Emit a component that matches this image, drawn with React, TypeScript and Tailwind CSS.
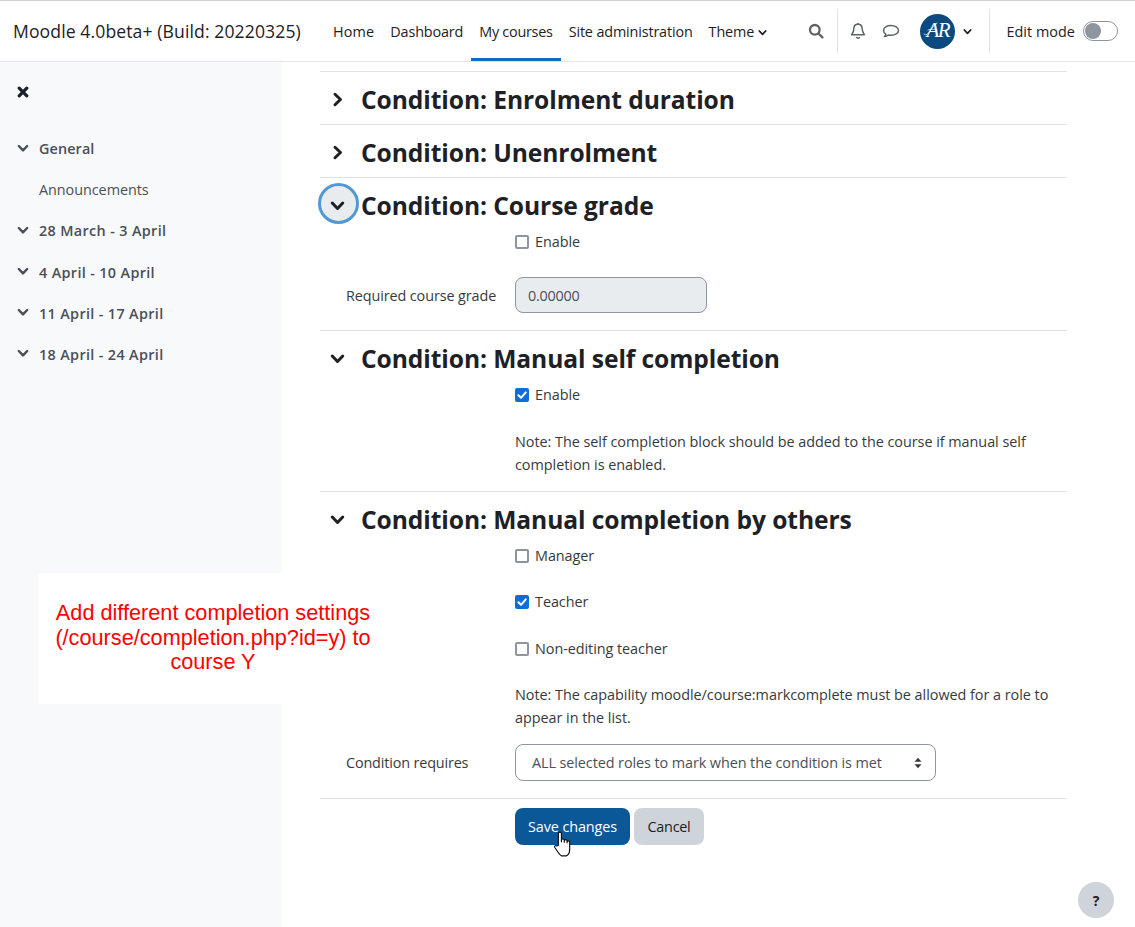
import React from "react";

const Chevron = ({ right = false, className = "" }: { right?: boolean; className?: string }) => (
  <svg viewBox="0 0 12 12" className={className} fill="none" stroke="currentColor" strokeWidth="2.4" strokeLinecap="round" strokeLinejoin="round">
    {right ? <path d="M4 1.8 8.4 6 4 10.2" /> : <path d="M1.8 4 6 8.4 10.2 4" />}
  </svg>
);

const Box = ({ checked = false }: { checked?: boolean }) =>
  checked ? (
    <span className="w-[14px] h-[14px] rounded-[2px] bg-[#0f6cd8] flex items-center justify-center shrink-0">
      <svg viewBox="0 0 14 14" className="w-[14px] h-[14px]" fill="none" stroke="#fff" strokeWidth="2" strokeLinecap="round" strokeLinejoin="round">
        <path d="M3.4 7.2 6 9.8 10.8 4.4" />
      </svg>
    </span>
  ) : (
    <span className="w-[14px] h-[14px] rounded-[2px] border-2 border-[#8f959e] bg-white shrink-0" />
  );

const Check = ({ label, checked = false, cls = "" }: { label: string; checked?: boolean; cls?: string }) => (
  <div className={`flex items-center gap-[6px] h-[22px] text-[14.4px] text-[#373a3c] tracking-[-0.05px] ${cls}`}>
    <Box checked={checked} />
    <span>{label}</span>
  </div>
);

const Section = ({
  title,
  open = true,
  focus = false,
  children,
  cls = "",
}: {
  title: string;
  open?: boolean;
  focus?: boolean;
  children?: React.ReactNode;
  cls?: string;
}) => (
  <section className={`border-t border-[#dee2e6] ${cls}`}>
    <div className="relative flex items-center h-[52px] pl-[41px] pt-[4px]">
      {focus && (
        <span className="absolute left-[-2px] top-[5px] w-[41px] h-[41px] rounded-full bg-[#e9ecef] border-[3px] border-[#5397d3]" />
      )}
      <Chevron right={!open} className="absolute left-[10px] top-[20px] w-[15px] h-[15px] text-[#1d2125]" />
      <h3 className="relative text-[24.6px] font-bold text-[#1d2125] tracking-[-0.08px]">{title}</h3>
    </div>
    {children}
  </section>
);

const navItem = "flex items-center h-full px-2 pt-[2px] text-[14.4px] text-[#1d2125]";

const sideItems = ["28 March - 3 April", "4 April - 10 April", "11 April - 17 April", "18 April - 24 April"];

export default function App() {
  return (
    <div className="relative w-[1135px] h-[927px] overflow-hidden bg-white font-['Open_Sans','Noto_Sans',sans-serif] tracking-[-0.25px]">
      <header className="h-[62px] border-t border-t-[#d0d0d0] border-b border-b-[#e3e5e8] flex items-center pl-[13px] bg-white">
        <div className="text-[17.6px] text-[#1d2125] w-[312px] whitespace-nowrap tracking-[0.1px]">Moodle 4.0beta+ (Build: 20220325)</div>
        <nav className="flex h-full tracking-[-0.15px]">
          <a className={`${navItem} tracking-[0.15px]`}>Home</a>
          <a className={navItem}>Dashboard</a>
          <a className={`${navItem} relative tracking-[-0.25px]`}>
            My courses
            <span className="absolute left-0 right-0 bottom-0 h-[3px] bg-[#0f6cbf]" />
          </a>
          <a className={navItem}>Site administration</a>
          <a className={`${navItem} gap-1`}>
            Theme <Chevron className="w-[9px] h-[9px]" />
          </a>
        </nav>
        <div className="ml-auto flex items-center h-full">
          <svg viewBox="0 0 16 16" className="w-[16px] h-[16px] text-[#5f6368] mr-[13px]" fill="none" stroke="currentColor" strokeWidth="2.3" strokeLinecap="round">
            <circle cx="6.8" cy="6.8" r="4.8" />
            <path d="M10.5 10.5 14.4 14.4" />
          </svg>
          <div className="w-px h-[44px] bg-[#dee2e6]" />
          <svg viewBox="0 0 16 18" className="w-[16px] h-[18px] ml-[12px] text-[#5f6368]" fill="none" stroke="currentColor" strokeWidth="1.5" strokeLinejoin="round">
            <path d="M8 2.2c-2.8 0-4.2 2.1-4.2 4.6 0 3.4-1.8 5-2.2 6h12.800c-.4-1-2.2-2.6-2.2-6 0-2.500-1.400-4.600-4.200-4.600Z" />
            <path d="M8 1v1.2M6.400 15a1.700 1.700 0 0 0 3.200 0" />
          </svg>
          <svg viewBox="0 0 18 16" className="w-[18px] h-[16px] ml-[16px] text-[#5f6368]" fill="none" stroke="currentColor" strokeWidth="1.5" strokeLinejoin="round">
            <path d="M9 2.5c-4 0-7.500 2-7.500 5 0 1.500 1 2.800 2.400 3.600-.2 1-.8 1.800-1.500 2.400 1.500-.1 3-.7 4-1.500.8.1 1.600.2 2.600.2 4 0 7.500-2 7.500-4.700s-3.500-5-7.500-5Z" />
          </svg>
          <div className="relative ml-[20px] w-[35px] h-[35px] rounded-full bg-[#0b4a80] flex items-center justify-center text-white text-[21px] italic font-['Liberation_Serif',serif] tracking-[-1.5px]">
            <svg viewBox="0 0 35 35" className="absolute inset-0 w-[35px] h-[35px]" fill="none" stroke="#e8eef4" strokeWidth="0.8" strokeLinecap="round">
              <path d="M4 20c2 2 4 0 6-3 3-4 5-7 7-8M8 16c3-1 6-1 9 0" />
            </svg>
            <span className="relative">AR</span>
          </div>
          <Chevron className="w-[9px] h-[9px] text-[#1d2125] ml-[8px] mr-[17px]" />
          <div className="w-px h-[44px] bg-[#dee2e6]" />
          <span className="ml-[16px] text-[14.4px] text-[#1d2125] tracking-[0.05px] pt-[1px]">Edit mode</span>
          <span className="ml-[8px] mr-[17px] w-[35px] h-[20px] rounded-full border border-[#8f959e] bg-white p-[1px] flex items-center">
            <span className="w-[16px] h-[16px] rounded-full bg-[#8f959e]" />
          </span>
        </div>
      </header>

      <div className="flex h-[865px]">
        <aside className="w-[282px] bg-[#f8f9fa] shrink-0 pl-[17px]">
          <svg viewBox="0 0 12 12" className="w-[12px] h-[12px] mt-[24px] text-[#1d2125]" fill="none" stroke="currentColor" strokeWidth="3.2" strokeLinecap="round">
            <path d="M2.200 2.200 9.800 9.800M9.800 2.200 2.200 9.800" />
          </svg>
          <div className="mt-[40px] text-[14.4px] text-[#495057]">
            <div className="flex items-center h-[22px] font-semibold tracking-[0.1px]">
              <Chevron className="w-[12px] h-[12px] mr-[10px] -mt-[3px]" />
              General
            </div>
            <div className="h-[22px] mt-[19px] pl-[22px] flex items-center tracking-[-0.05px]">Announcements</div>
            {sideItems.map((s) => (
              <div key={s} className="flex items-center h-[22px] mt-[19.2px] font-semibold tracking-[0.35px]">
                <Chevron className="w-[12px] h-[12px] mr-[10px] -mt-[3px]" />
                {s}
              </div>
            ))}
          </div>
        </aside>

        <main className="w-[747px] ml-[38px] pt-[9px]">
          <Section title="Condition: Enrolment duration" open={false} />
          <Section title="Condition: Unenrolment" open={false} />
          <Section title="Condition: Course grade" focus cls="h-[153px]">
            <div className="pl-[195px] pt-[1px]">
              <Check label="Enable" />
            </div>
            <div className="flex items-center mt-[24px]">
              <label className="w-[195px] pl-[26px] pt-[1px] text-[14.4px] text-[#373a3c] tracking-[-0.1px]">Required course grade</label>
              <div className="w-[192px] h-[36px] rounded-[8px] border border-[#8f959e] bg-[#e9ecef] pl-[12px] pt-[1px] flex items-center text-[14.4px] text-[#495057]">
                0.00000
              </div>
            </div>
          </Section>
          <Section title="Condition: Manual self completion" cls="h-[161px]">
            <div className="pl-[195px] pt-[1px]">
              <Check label="Enable" checked />
              <p className="mt-[23.5px] text-[14.4px] leading-[23px] text-[#373a3c] w-[530px] tracking-[-0.03px]">
                Note: The self completion block should be added to the course if manual self completion is enabled.
              </p>
            </div>
          </Section>
          <Section title="Condition: Manual completion by others" cls="h-[307px]">
            <div className="pl-[195px] pt-[1px]">
              <Check label="Manager" />
              <Check label="Teacher" checked cls="mt-[24px]" />
              <Check label="Non-editing teacher" cls="mt-[25px]" />
              <p className="mt-[23px] text-[14.4px] leading-[23px] text-[#373a3c] w-[545px] tracking-[-0.03px]">
                Note: The capability moodle/course:markcomplete must be allowed for a role to appear in the list.
              </p>
            </div>
            <div className="flex items-center mt-[15px]">
              <label className="w-[195px] pl-[26px] text-[14.4px] text-[#373a3c] tracking-[-0.15px]">Condition requires</label>
              <div className="relative w-[421px] h-[37px] rounded-[8px] border border-[#8f959e] bg-white pl-[16px] flex items-center text-[14.4px] text-[#495057] tracking-[-0.08px]">
                ALL selected roles to mark when the condition is met
                <svg viewBox="0 0 8 12" className="absolute right-[13px] top-[12px] w-[8px] h-[12px] text-[#343a40]" fill="currentColor">
                  <path d="M4 .8 7.500 4.800H.5ZM4 11.200 .5 7.200h7Z" />
                </svg>
              </div>
            </div>
          </Section>
          <div className="border-t border-[#dee2e6] pl-[195px] pt-[9px] flex gap-[4px]">
            <button className="relative w-[115px] h-[37px] rounded-[8px] bg-[#0b5899] text-white text-[14.4px] tracking-[-0.1px]">
              Save changes
              <svg viewBox="0 0 16 22" className="absolute left-[38px] top-[23px] w-[19px] h-[26px]" fill="#fff" stroke="#111" strokeWidth="1" strokeLinejoin="round">
                <path d="M4.500 12V2.200a1.300 1.300 0 0 1 2.600 0V9l0-1.200a1.200 1.200 0 0 1 2.400 0V9.500l0-1a1.200 1.200 0 0 1 2.400 0v1.500l0-.6a1.100 1.100 0 0 1 2.200 0V15c0 3-1.300 5.500-3 6H7c-1.500-.7-3.500-4-5.500-7-.7-1.200.7-2.300 1.700-1.300Z" />
              </svg>
            </button>
            <button className="w-[70px] h-[37px] rounded-[8px] bg-[#ced4da] text-[#1d2125] text-[14.4px]">Cancel</button>
          </div>
        </main>
      </div>

      <div className="absolute left-[38px] top-[573px] w-[350px] h-[131px] bg-white flex items-center justify-center text-center text-[21.7px] leading-[24.5px] tracking-normal text-[#ff0000] font-['Liberation_Sans',sans-serif]">
        <p className="w-[345px] -mt-[1px]">Add different completion settings (/course/completion.php?id=y) to course Y</p>
      </div>

      <div className="absolute left-[1078px] top-[882px] w-[36px] h-[36px] rounded-full bg-[#ced4da] flex items-center justify-center text-[14px] font-bold text-[#1d2125]">
        ?
      </div>
    </div>
  );
}
